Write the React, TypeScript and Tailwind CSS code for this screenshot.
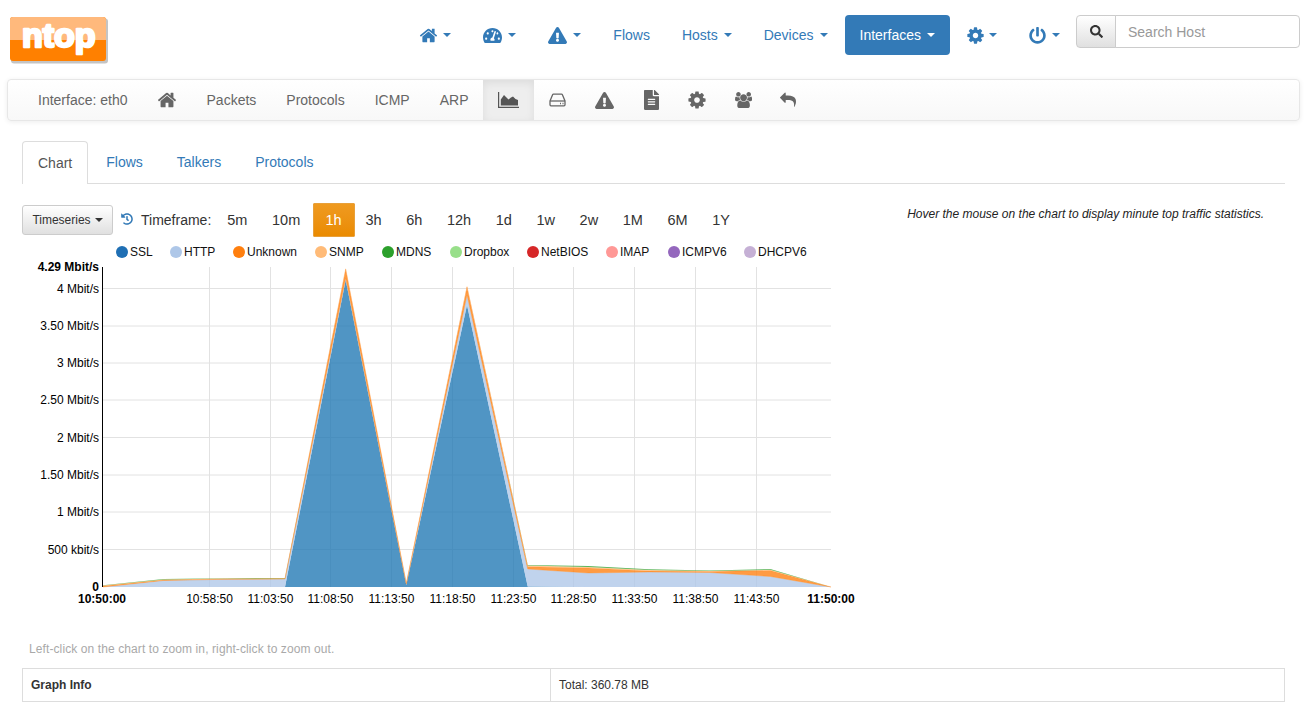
import type { ReactNode } from "react";
import {
  FaExclamationTriangle,
  FaFileAlt,
  FaHistory,
  FaPowerOff,
  FaSearch,
  FaTachometerAlt,
} from "react-icons/fa";

const HOME =
  "M1472 992v480q0 26-19 45t-45 19h-384v-384h-256v384h-384q-26 0-45-19t-19-45v-480q0-1 .5-3t.5-3l575-474 575 474q1 2 1 6zm223-69l-62 74q-8 9-21 11h-3q-13 0-21-7l-692-577-692 577q-12 8-24 7-13-2-21-11l-62-74q-8-10-7-23.5t11-21.5l719-599q32-26 76-26t76 26l244 204v-195q0-14 9-23t23-9h192q14 0 23 9t9 23v408l219 182q10 8 11 21.5t-7 23.5z";
const COG =
  "M1152 896q0-106-75-181t-181-75-181 75-75 181 75 181 181 75 181-75 75-181zm512-109v222q0 12-8 23t-20 13l-185 28q-19 54-39 91 35 50 107 138 10 12 10 25t-9 23q-27 37-99 108t-94 71q-12 0-26-9l-138-108q-44 23-91 38-16 136-29 186-7 28-36 28h-222q-14 0-24.5-8.5t-11.5-21.5l-28-184q-49-16-90-37l-141 107q-10 9-25 9-14 0-25-11-126-114-165-168-7-10-7-23 0-12 8-23 15-21 51-66.5t54-70.5q-27-50-41-99l-183-27q-13-2-21-12.5t-8-23.5v-222q0-12 8-23t19-13l186-28q14-46 39-92-40-57-107-138-10-12-10-24 0-10 9-23 26-36 98.5-107.5t94.500-71.5q13 0 26 10l138 107q44-23 91-38 16-136 29-186 7-28 36-28h222q14 0 24.5 8.5t11.500 21.5l28 184q49 16 90 37l142-107q9-9 24-9 13 0 25 10 129 119 165 170 7 8 7 22 0 12-8 23-15 21-51 66.5t-54 70.5q26 50 41 98l183 28q13 2 21 12.5t8 23.5z";
const USERS =
  "M593 896q-162 5-265 128h-134q-82 0-138-40.500t-56-118.500q0-353 124-353 6 0 43.500 21t97.500 42.500 119 21.500q67 0 133-23-5 37-5 66 0 139 81 256zm1071 637q0 120-73 189.500t-194 69.500h-874q-121 0-194-69.500t-73-189.500q0-53 3.500-103.500t14-109 26.500-108.500 43-97.500 62-81 85.500-53.500 111.500-20q10 0 43 21.500t73 48 107 48 135 21.500 135-21.500 107-48 73-48 43-21.500q61 0 111.500 20t85.500 53.500 62 81 43 97.500 26.500 108.500 14 109 3.500 103.500zm-1024-1277q0 106-75 181t-181 75-181-75-75-181 75-181 181-75 181 75 75 181zm704 384q0 159-112.500 271.500t-271.500 112.500-271.500-112.500-112.500-271.500 112.500-271.500 271.500-112.500 271.500 112.500 112.500 271.500zm576 225q0 78-56 118.500t-138 40.500h-134q-103-123-265-128 81-117 81-256 0-29-5-66 66 23 133 23 59 0 119-21.500t97.500-42.500 43.500-21q124 0 124 353zm-128-609q0 106-75 181t-181 75-181-75-75-181 75-181 181-75 181 75 75 181z";
const REPLY =
  "M1792 1120q0 166-127 451-3 7-10.500 24t-13.500 30-13 22q-12 17-28 17-15 0-23.500-10t-8.500-25q0-9 2.500-26.500t2.500-23.500q5-68 5-123 0-101-17.500-181t-48.500-138.500-80-101-105.500-69.500-133-42.500-154-21.500-175.500-6h-224v256q0 26-19 45t-45 19-45-19l-512-512q-19-19-19-45t19-45l512-512q19-19 45-19t45 19 19 45v256h224q713 0 875 403 53 134 53 333z";

function Fa4({ d, size, box = 1792 }: { d: string; size: number; box?: number }) {
  return (
    <svg viewBox={`0 0 ${box} 1792`} width={(size * box) / 1792} height={size} fill="currentColor" className="shrink-0">
      <path d={d} />
    </svg>
  );
}

function Caret() {
  return (
    <span className="ml-[6px] inline-block h-0 w-0 border-x-[4px] border-t-[4px] border-x-transparent border-t-current" />
  );
}

function Pill({ children, active, caret = true }: { children: ReactNode; active?: boolean; caret?: boolean }) {
  return (
    <a
      className={
        active
          ? "flex h-10 items-center rounded-[4px] bg-[#337ab7] px-[15px] text-white"
          : "flex h-10 items-center rounded-[4px] px-[15px] text-[#337ab7]"
      }
    >
      {children}
      {caret && <Caret />}
    </a>
  );
}

function Logo() {
  return (
    <svg width="100" height="50" viewBox="0 0 100 50" className="block">
      <rect x="1" y="1.500" width="97" height="45" rx="3" fill="#c4c4c4" />
      <rect x="0" y="0" width="96" height="44" rx="3" fill="#ff8000" />
      <path d="M0 23V3a3 3 0 0 1 3-3h90a3 3 0 0 1 3 3v20z" fill="#ffb97c" />
      <text
        x="12"
        y="30"
        fontFamily="'Liberation Sans', sans-serif"
        fontSize="34"
        fontWeight="700"
        fill="#fff"
        stroke="#fff"
        strokeWidth="2.5"
        strokeLinejoin="round"
      >
        ntop
      </text>
    </svg>
  );
}

function AreaIcon() {
  return (
    <svg width="21" height="16" viewBox="0 0 21 16" fill="currentColor">
      <path d="M0 0h1.200v14.800H21V16H0z" />
      <path d="M2.800 13.500V7.500L6 3l4.500 4.500 2.500-2 2-1 2.500 2.500 2.500 1v5.500z" />
    </svg>
  );
}

function DiskIcon() {
  return (
    <svg width="17" height="14" viewBox="0 0 17 14" fill="none" stroke="currentColor" strokeWidth="1.300" className="shrink-0">
      <path d="M1 8l2.600-6.300a1 1 0 0 1 .9-.6h8a1 1 0 0 1 .9.6L16 8v3.800a1 1 0 0 1-1 1H2a1 1 0 0 1-1-1z" />
      <path d="M1 8h15" />
      <path d="M11 10.500h1M13.500 10.500h1" strokeWidth="1.500" />
    </svg>
  );
}

const SUB_TEXT = "flex h-full items-center px-[15px] text-[#666]";
const SUB_ICON = "flex h-full items-center justify-center px-[15px] text-[#666]";

const TIMEFRAMES = ["5m", "10m", "1h", "3h", "6h", "12h", "1d", "1w", "2w", "1M", "6M", "1Y"];

const LEGEND = [
  { name: "SSL", color: "#1f6fb4", x: 122 },
  { name: "HTTP", color: "#aec7e8", x: 176 },
  { name: "Unknown", color: "#ff7f0e", x: 239 },
  { name: "SNMP", color: "#ffbb78", x: 321 },
  { name: "MDNS", color: "#2ca02c", x: 388 },
  { name: "Dropbox", color: "#98df8a", x: 456 },
  { name: "NetBIOS", color: "#d62728", x: 533 },
  { name: "IMAP", color: "#ff9896", x: 612 },
  { name: "ICMPV6", color: "#9467bd", x: 674 },
  { name: "DHCPV6", color: "#c5b0d5", x: 750 },
];

const Y_TICKS = [
  { label: "4 Mbit/s", y: 288.5 },
  { label: "3.50 Mbit/s", y: 326 },
  { label: "3 Mbit/s", y: 363 },
  { label: "2.50 Mbit/s", y: 400 },
  { label: "2 Mbit/s", y: 437.5 },
  { label: "1.50 Mbit/s", y: 475 },
  { label: "1 Mbit/s", y: 512 },
  { label: "500 kbit/s", y: 549.5 },
];

const X_TICKS = [
  { label: "10:58:50", x: 209.5 },
  { label: "11:03:50", x: 270.5 },
  { label: "11:08:50", x: 330.5 },
  { label: "11:13:50", x: 391.5 },
  { label: "11:18:50", x: 452.5 },
  { label: "11:23:50", x: 513.5 },
  { label: "11:28:50", x: 573.5 },
  { label: "11:33:50", x: 634.5 },
  { label: "11:38:50", x: 695.5 },
  { label: "11:43:50", x: 756.5 },
];

const XS = [103, 163.7, 224.3, 285, 345.7, 406.3, 467, 527.7, 588.3, 649, 709.7, 770.3, 831];
const BASE = XS.map(() => 587);
const STACKS = [
  { color: "#1f77b4", top: [587, 587, 587, 587, 280, 585, 305, 586.5, 587, 587, 587, 587, 587] },
  { color: "#aec7e8", top: [587, 580.5, 579.3, 579, 278, 584, 295, 569, 573, 572, 572.5, 576.5, 587] },
  { color: "#ff7f0e", top: [586, 580, 579, 578.6, 269, 583.5, 287, 566.7, 568, 571, 571.5, 570.5, 587] },
  { color: "#ffbb78", top: [585.5, 579.5, 578.6, 578.3, 268, 583, 285.5, 565.5, 567, 570, 571, 569.8, 587] },
  { color: "#2ca02c", top: [585.2, 579, 578.2, 578, 268, 583, 285.5, 565, 566, 569.3, 570.6, 569, 587] },
];

function band(lower: number[], upper: number[]) {
  const up = XS.map((x, i) => `${x},${upper[i]}`);
  const down = XS.map((x, i) => `${x},${lower[i]}`).reverse();
  return [...up, ...down].join(" ");
}

function Chart() {
  return (
    <svg
      viewBox="22 243 850 367"
      width="850"
      height="367"
      className="block"
      fontFamily="'Liberation Sans', sans-serif"
      fontSize="12"
    >
      {LEGEND.map((l) => (
        <g key={l.name}>
          <circle cx={l.x} cy={252} r={6} fill={l.color} />
          <text x={l.x + 8} y={256} fill="#111">
            {l.name}
          </text>
        </g>
      ))}
      {X_TICKS.map((t) => (
        <line key={t.label} x1={t.x} x2={t.x} y1={267} y2={587} stroke="#e2e2e2" />
      ))}
      {Y_TICKS.map((t) => (
        <line key={t.label} x1={103} x2={831} y1={t.y} y2={t.y} stroke="#e2e2e2" />
      ))}
      {STACKS.map((s, i) => (
        <polygon
          key={s.color}
          points={band(i === 0 ? BASE : STACKS[i - 1].top, s.top)}
          fill={s.color}
          fillOpacity={0.78}
          stroke={i === 2 ? s.color : "none"}
          strokeOpacity={0.5}
          strokeWidth={0.6}
        />
      ))}
      <line x1={102.5} x2={102.5} y1={267} y2={587} stroke="#000" />
      <text x={99} y={271} textAnchor="end" fontWeight="700">
        4.29 Mbit/s
      </text>
      {Y_TICKS.map((t) => (
        <text key={t.label} x={99} y={t.y + 4} textAnchor="end">
          {t.label}
        </text>
      ))}
      <text x={99} y={591} textAnchor="end" fontWeight="700">
        0
      </text>
      <text x={102} y={603} textAnchor="middle" fontWeight="700">
        10:50:00
      </text>
      {X_TICKS.map((t) => (
        <text key={t.label} x={t.x} y={603} textAnchor="middle">
          {t.label}
        </text>
      ))}
      <text x={831} y={603} textAnchor="middle" fontWeight="700">
        11:50:00
      </text>
    </svg>
  );
}

export default function App() {
  return (
    <div className="h-[717px] overflow-hidden bg-white font-['Liberation_Sans',sans-serif] text-[14px] leading-5 text-[#333]">
      <header className="flex h-[79px] items-start">
        <div className="ml-[10px] mt-[17px]">
          <Logo />
        </div>
        <nav className="ml-auto flex items-start gap-[2px] pr-[8px] pt-[15px]">
          <Pill>
            <span className="flex w-[17px] justify-center">
              <Fa4 d={HOME} size={19} />
            </span>
          </Pill>
          <Pill>
            <FaTachometerAlt size={19} />
          </Pill>
          <Pill>
            <FaExclamationTriangle size={19} />
          </Pill>
          <Pill caret={false}>Flows</Pill>
          <Pill>Hosts</Pill>
          <Pill>Devices</Pill>
          <Pill active>Interfaces</Pill>
          <Pill>
            <span className="flex w-[16px] justify-center">
              <Fa4 d={COG} size={19} />
            </span>
          </Pill>
          <Pill>
            <FaPowerOff size={17} />
          </Pill>
          <div className="-ml-px flex h-[33px] w-[224px] rounded-[4px]">
            <button className="flex w-[40px] items-center justify-center rounded-l-[4px] border border-[#ccc] bg-gradient-to-b from-white to-[#e0e0e0] text-[#333]">
              <FaSearch size={13} />
            </button>
            <input
              placeholder="Search Host"
              className="-ml-px min-w-0 flex-1 rounded-r-[4px] border border-[#ccc] px-3 text-[14px] outline-none placeholder:text-[#999]"
            />
          </div>
        </nav>
      </header>

      <div className="ml-[7px] mr-[8px] flex h-[42px] items-center rounded-[4px] border border-[#e7e7e7] bg-gradient-to-b from-white to-[#f8f8f8] pl-[15px] shadow-[0_1px_5px_rgba(0,0,0,0.075)]">
        <a className={SUB_TEXT}>Interface: eth0</a>
        <a className={SUB_ICON}>
          <span className="flex w-[19px] justify-center">
            <Fa4 d={HOME} size={20} />
          </span>
        </a>
        <a className={SUB_TEXT}>Packets</a>
        <a className={SUB_TEXT}>Protocols</a>
        <a className={SUB_TEXT}>ICMP</a>
        <a className={SUB_TEXT}>ARP</a>
        <a className="flex h-full items-center bg-[#eee] px-[15px] text-[#555] shadow-[inset_0_3px_9px_rgba(0,0,0,0.075)]">
          <AreaIcon />
        </a>
        <a className={SUB_ICON}>
          <span className="flex w-[16px] justify-center">
            <DiskIcon />
          </span>
        </a>
        <a className={SUB_ICON}>
          <FaExclamationTriangle size={19} />
        </a>
        <a className={SUB_ICON}>
          <span className="flex w-[15px] justify-center">
            <FaFileAlt size={20} />
          </span>
        </a>
        <a className={SUB_ICON}>
          <span className="flex w-[16px] justify-center">
            <Fa4 d={COG} size={20} />
          </span>
        </a>
        <a className={SUB_ICON}>
          <span className="flex w-[16px] justify-center">
            <Fa4 d={USERS} size={16} box={1920} />
          </span>
        </a>
        <a className={SUB_ICON}>
          <span className="flex w-[14px] justify-center">
            <Fa4 d={REPLY} size={16} />
          </span>
        </a>
      </div>

      <main className="pl-[22px] pr-[23px] pt-[20px]">
        <ul className="flex h-[43px] gap-[2px] border-b border-[#ddd]">
          <li className="flex h-[43px] items-center rounded-t-[4px] border border-b-0 border-[#ddd] bg-white px-[15px] pb-[1px] text-[#555]">
            Chart
          </li>
          <li className="flex h-[42px] items-center px-[16px] text-[#337ab7]">Flows</li>
          <li className="flex h-[42px] items-center px-[16px] text-[#337ab7]">Talkers</li>
          <li className="flex h-[42px] items-center px-[16px] text-[#337ab7]">Protocols</li>
        </ul>

        <div className="mt-[19px] flex items-start">
          <button className="mt-[2px] flex h-[30px] w-[91px] items-center justify-center rounded-[3px] border border-[#ccc] bg-gradient-to-b from-white to-[#e0e0e0] text-[12px] text-[#333]">
            Timeseries
            <span className="ml-[4px] inline-block h-0 w-0 border-x-[4px] border-t-[4px] border-x-transparent border-t-current" />
          </button>
          <FaHistory size={12} className="ml-[8px] mt-[10px] text-[#337ab7]" />
          <span className="ml-[8px] mt-[7px]">Timeframe:</span>
          <div className="ml-[3.7px] flex">
            {TIMEFRAMES.map((t) => (
              <button
                key={t}
                className={
                  t === "1h"
                    ? "-mr-[1.5px] h-[34px] rounded-[1px] border border-[#e8a03a] bg-gradient-to-b from-[#ef9a1f] to-[#ea8b00] px-[12px] text-[14.5px] font-medium text-white"
                    : "h-[34px] px-[12.3px] text-[14.5px] text-[#333]"
                }
              >
                {t}
              </button>
            ))}
          </div>
          <p className="ml-auto mr-[21px] mt-[1px] text-[12px] italic text-[#222]">
            Hover the mouse on the chart to display minute top traffic statistics.
          </p>
        </div>

        <div className="mt-[6px]">
          <Chart />
        </div>

        <p className="ml-[7px] mt-[31px] text-[12px] leading-[17px] tracking-[0.1px] text-[#a9a9a9]">
          Left-click on the chart to zoom in, right-click to zoom out.
        </p>

        <table className="mt-[10px] w-full border-collapse text-[12px]">
          <tbody>
            <tr className="h-[33px]">
              <th className="w-[528px] border border-[#ddd] px-2 text-left font-bold">Graph Info</th>
              <td className="border border-[#ddd] px-2">Total: 360.78 MB</td>
            </tr>
          </tbody>
        </table>
      </main>
    </div>
  );
}
